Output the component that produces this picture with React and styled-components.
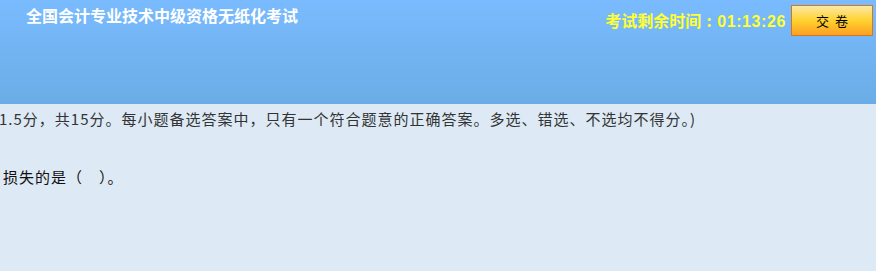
import React from "react";
import styled, { createGlobalStyle } from "styled-components";

const GlobalStyle = createGlobalStyle`
  html, body {
    margin: 0;
    padding: 0;
    background: #dde9f5;
    overflow: hidden;
  }
  body {
    font-family: "Noto Sans CJK SC", "Liberation Sans", sans-serif;
  }
`;

const Page = styled.div`
  width: 876px;
  height: 271px;
  background: #dde9f5;
  overflow: hidden;
`;

const Header = styled.header`
  height: 104px;
  background: linear-gradient(to bottom, #79bbfe 0%, #6aade6 100%);
  display: flex;
  justify-content: space-between;
  align-items: flex-start;
`;

const Title = styled.h1`
  margin: 0;
  padding: 4px 0 0 26px;
  font-size: 16px;
  line-height: 22px;
  font-weight: bold;
  color: #ffffff;
`;

const Right = styled.div`
  display: flex;
  align-items: center;
  gap: 5px;
  padding: 4px 3px 0 0;
`;

const Timer = styled.div`
  font-size: 16px;
  font-weight: bold;
  color: #ffff33;
  line-height: 31px;
  padding-top: 1px;
`;

const Colon = styled.span`
  display: inline-block;
  width: 16px;
  text-align: center;
`;

const Time = styled.span`
  font-family: "Liberation Sans", "Noto Sans CJK SC", sans-serif;
  letter-spacing: 0.6px;
`;

const SubmitButton = styled.button`
  width: 82px;
  height: 31px;
  border: 1px solid #d3781e;
  background: linear-gradient(to bottom, #fbe9a6 0%, #ffd22e 50%, #fd9f24 100%);
  font-family: "Noto Sans CJK SC", sans-serif;
  font-size: 13px;
  color: #000;
  letter-spacing: 6px;
  text-indent: 6px;
  padding: 0;
  cursor: pointer;
`;

const Content = styled.main`
  overflow: hidden;
  padding-top: 5px;
`;

const Line = styled.p`
  margin: 0 0 ${(p) => p.$after || 0}px ${(p) => p.$shift || 0}px;
  font-size: 15px;
  letter-spacing: 1px;
  line-height: 20px;
  white-space: nowrap;
  color: ${(p) => p.$color || "#333"};
`;

export default function App() {
  return (
    <>
      <GlobalStyle />
      <Page>
        <Header>
          <Title>全国会计专业技术中级资格无纸化考试</Title>
          <Right>
            <Timer>
              考试剩余时间<Colon>:</Colon><Time>01:13:26</Time>
            </Timer>
            <SubmitButton>交卷</SubmitButton>
          </Right>
        </Header>
        <Content>
          <Line $shift={-1} $after={38}>
            1.5分，共15分。每小题备选答案中，只有一个符合题意的正确答案。多选、错选、不选均不得分。)
          </Line>
          <Line $shift={3} $color="#111">
            损失的是（　）。
          </Line>
        </Content>
      </Page>
    </>
  );
}
